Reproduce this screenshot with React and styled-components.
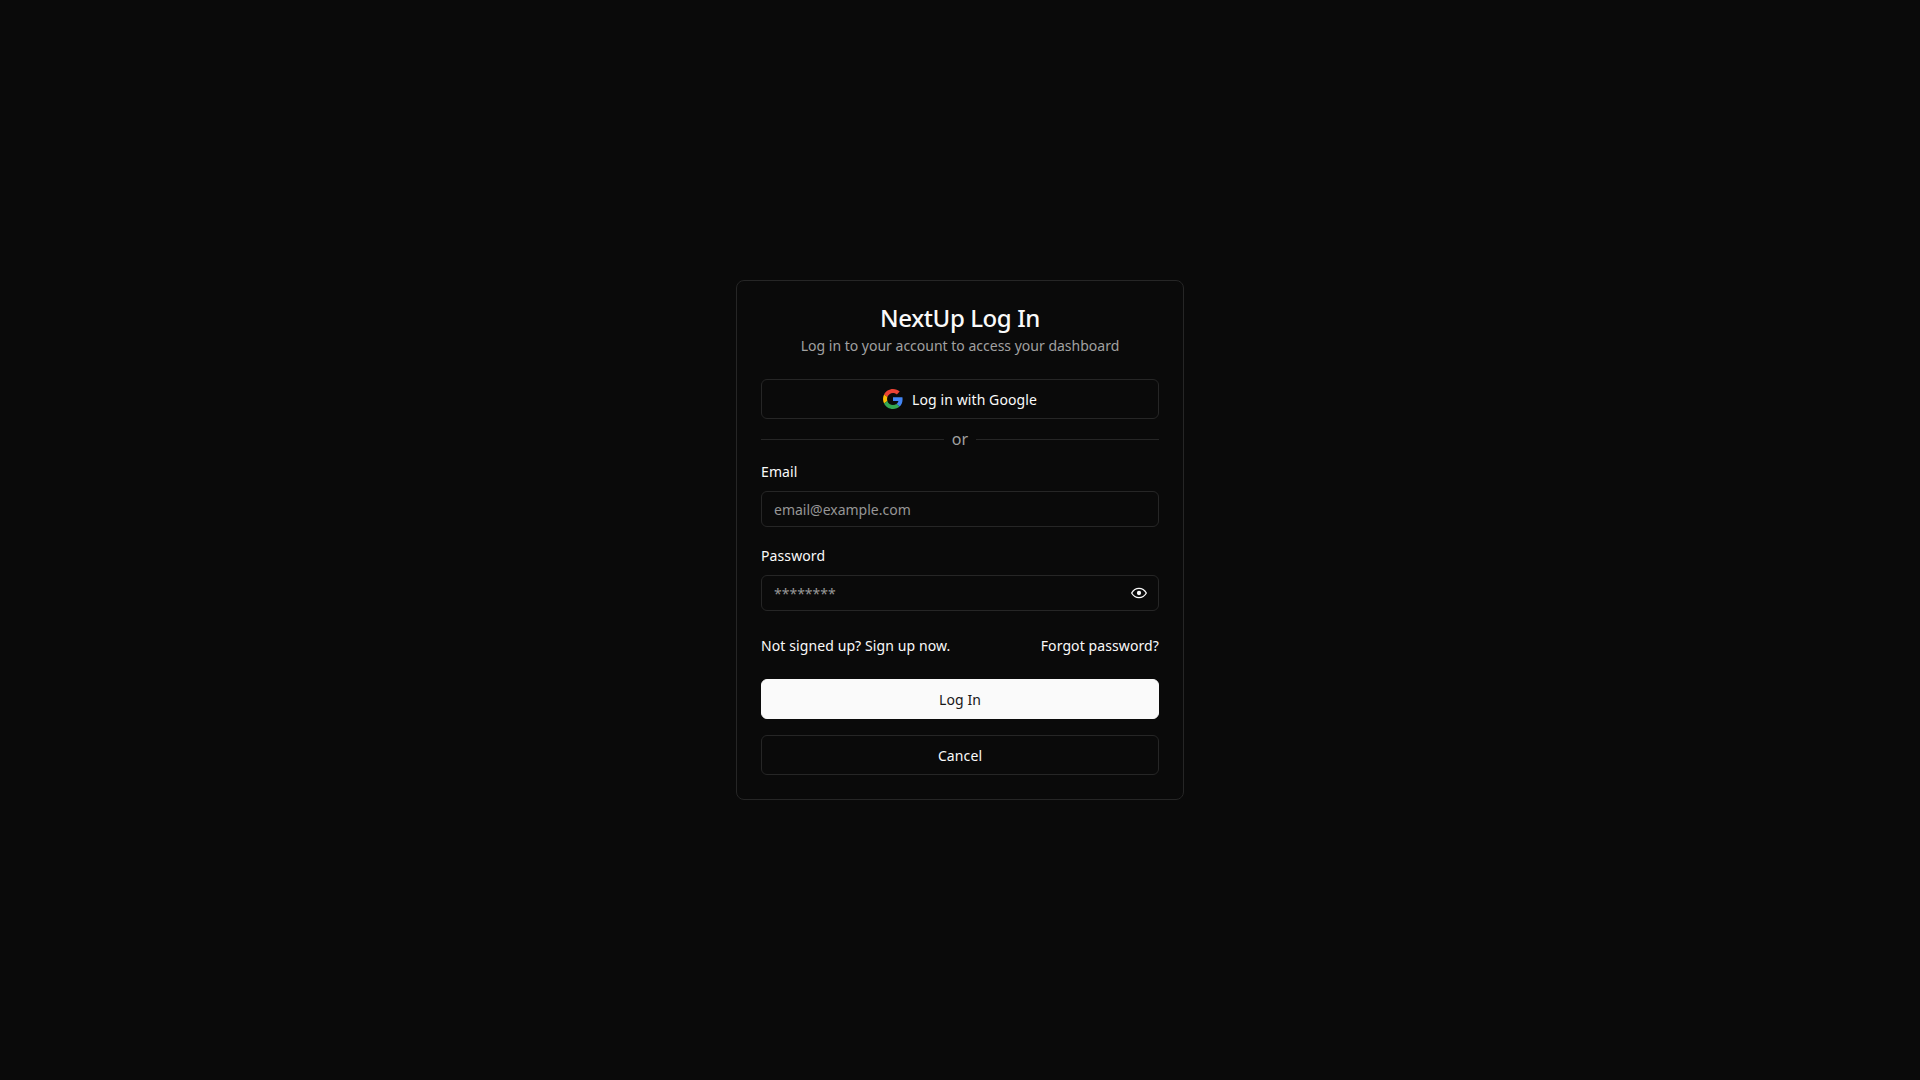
import React from "react";
import styled, { createGlobalStyle } from "styled-components";

const GlobalStyle = createGlobalStyle`
  * {
    box-sizing: border-box;
  }

  body {
    margin: 0;
    background-color: #0a0a0a;
    color: #fafafa;
    font-family: "Noto Sans", sans-serif;
  }
`;

const Page = styled.main`
  display: flex;
  align-items: center;
  justify-content: center;
  min-height: 100vh;
`;

const Card = styled.form`
  display: flex;
  flex-direction: column;
  width: 448px;
  padding: 24px;
  background-color: #0a0a0a;
  border: 1px solid #262626;
  border-radius: 8px;
`;

const Header = styled.header`
  margin-bottom: 23px;
  text-align: center;
`;

const Title = styled.h1`
  margin: 0 0 5px;
  font-size: 24px;
  line-height: 26px;
  font-weight: 550;
  letter-spacing: -0.41px;
`;

const Subtitle = styled.p`
  margin: 0;
  font-size: 14px;
  line-height: 20px;
  color: #a1a1a1;
`;

const Button = styled.button`
  display: flex;
  align-items: center;
  justify-content: center;
  gap: 9px;
  width: 100%;
  height: 40px;
  padding: 2px 16px 0;
  border: 1px solid ${(props) => (props.$primary ? "#fafafa" : "#262626")};
  border-radius: 6px;
  background-color: ${(props) => (props.$primary ? "#fafafa" : "#0a0a0a")};
  color: ${(props) => (props.$primary ? "#171717" : "#fafafa")};
  font-family: inherit;
  font-size: 14px;
  line-height: 20px;
  font-weight: 450;
  letter-spacing: 0.1px;
  cursor: pointer;

  svg {
    margin-top: -2px;
  }
`;

const Divider = styled.div`
  display: flex;
  align-items: center;
  gap: 8px;
  margin: 8px 0 12px;
  font-size: 16px;
  line-height: 24px;
  color: #a1a1a1;

  &::before,
  &::after {
    content: "";
    flex: 1;
    height: 1px;
    background-color: #262626;
  }
`;

const Field = styled.div`
  display: flex;
  flex-direction: column;
  gap: 10px;
  margin-bottom: 20px;
`;

const Label = styled.label`
  font-size: 14px;
  line-height: 18px;
  font-weight: 450;
  letter-spacing: 0.1px;
`;

const InputWrap = styled.div`
  position: relative;
`;

const Input = styled.input`
  display: block;
  width: 100%;
  height: 36px;
  padding: 4px 12px;
  border: 1px solid #262626;
  border-radius: 6px;
  background-color: transparent;
  color: #fafafa;
  font-family: inherit;
  font-size: 14px;
  outline: none;

  &::placeholder {
    color: #969696;
  }
`;

const EyeButton = styled.button`
  position: absolute;
  top: 10px;
  right: 12px;
  display: flex;
  padding: 0;
  border: none;
  background: none;
  color: #fafafa;
  cursor: pointer;
`;

const LinkRow = styled.div`
  display: flex;
  justify-content: space-between;
  margin: 5px 0 23px;
`;

const TextLink = styled.a`
  font-size: 14px;
  line-height: 20px;
  font-weight: 450;
  letter-spacing: 0.1px;
  color: #fafafa;
  text-decoration: none;
  cursor: pointer;
`;

const Actions = styled.div`
  display: flex;
  flex-direction: column;
  gap: 16px;
`;

const GoogleIcon = () => (
  <svg width="20" height="20" viewBox="0 0 48 48" aria-hidden="true">
    <path
      fill="#EA4335"
      d="M24 9.5c3.54 0 6.71 1.22 9.21 3.6l6.85-6.85C35.9 2.38 30.47 0 24 0 14.62 0 6.51 5.38 2.56 13.22l7.98 6.19C12.43 13.72 17.74 9.5 24 9.5z"
    />
    <path
      fill="#4285F4"
      d="M46.98 24.55c0-1.57-.15-3.09-.38-4.55H24v9.02h12.94c-.58 2.96-2.26 5.48-4.78 7.18l7.73 6c4.51-4.18 7.09-10.36 7.09-17.65z"
    />
    <path
      fill="#FBBC05"
      d="M10.53 28.59c-.48-1.45-.76-2.99-.76-4.59s.27-3.14.76-4.59l-7.98-6.19C.92 16.46 0 20.12 0 24c0 3.88.92 7.54 2.56 10.78l7.97-6.19z"
    />
    <path
      fill="#34A853"
      d="M24 48c6.48 0 11.93-2.13 15.89-5.81l-7.73-6c-2.15 1.45-4.92 2.3-8.16 2.3-6.26 0-11.57-4.22-13.47-9.91l-7.98 6.19C6.51 42.62 14.62 48 24 48z"
    />
  </svg>
);

const EyeIcon = () => (
  <svg
    width="16"
    height="16"
    viewBox="0 0 24 24"
    fill="none"
    stroke="currentColor"
    strokeWidth="2"
    strokeLinejoin="round"
    aria-hidden="true"
  >
    <path d="M1 12s4-7 11-7 11 7 11 7-4 7-11 7-11-7-11-7z" />
    <circle cx="12" cy="12" r="3.2" fill="currentColor" stroke="none" />
  </svg>
);

export default function App() {
  return (
    <>
      <GlobalStyle />
      <Page>
        <Card onSubmit={(e) => e.preventDefault()}>
          <Header>
            <Title>NextUp Log In</Title>
            <Subtitle>Log in to your account to access your dashboard</Subtitle>
          </Header>

          <Button type="button">
            <GoogleIcon />
            Log in with Google
          </Button>

          <Divider>or</Divider>

          <Field>
            <Label htmlFor="email">Email</Label>
            <Input id="email" type="email" placeholder="email@example.com" />
          </Field>

          <Field>
            <Label htmlFor="password">Password</Label>
            <InputWrap>
              <Input id="password" type="password" placeholder="********" />
              <EyeButton type="button" aria-label="Show password">
                <EyeIcon />
              </EyeButton>
            </InputWrap>
          </Field>

          <LinkRow>
            <TextLink>Not signed up? Sign up now.</TextLink>
            <TextLink>Forgot password?</TextLink>
          </LinkRow>

          <Actions>
            <Button type="submit" $primary>
              Log In
            </Button>
            <Button type="button">Cancel</Button>
          </Actions>
        </Card>
      </Page>
    </>
  );
}
